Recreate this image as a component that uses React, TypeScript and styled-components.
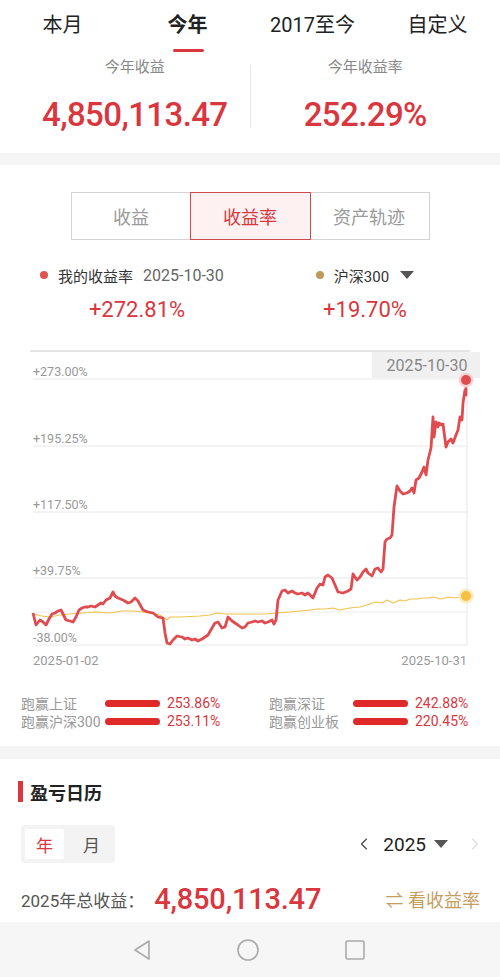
import React from "react";
import styled, { createGlobalStyle } from "styled-components";
import { ChevronLeft, ChevronRight } from "lucide-react";

const GlobalStyle = createGlobalStyle`
  html, body {
    margin: 0;
    padding: 0;
    background: #fff;
  }
  body {
    font-family: Roboto, "Noto Sans CJK SC", sans-serif;
    color: #222;
  }
  * {
    box-sizing: border-box;
  }
`;

const RED = "#d9363e";
const GOLD = "#c59d5f";

const Page = styled.div`
  width: 500px;
  height: 977px;
  overflow: hidden;
  display: flex;
  flex-direction: column;
  background: #fff;
`;

const TopNav = styled.div`
  height: 53px;
  display: grid;
  grid-template-columns: repeat(4, 1fr);
`;

const NavTab = styled.div<{ active?: boolean }>`
  position: relative;
  display: flex;
  justify-content: center;
  padding-top: 11px;
  font-size: 20px;
  line-height: 28px;
  font-weight: ${({ active }) => (active ? 700 : 400)};
  color: #222;

  &::after {
    content: "";
    display: ${({ active }) => (active ? "block" : "none")};
    position: absolute;
    left: 50%;
    bottom: 1px;
    width: 31px;
    height: 3px;
    margin-left: -15px;
    border-radius: 2px;
    background: ${RED};
  }
`;

const Stats = styled.div`
  height: 100px;
  display: grid;
  grid-template-columns: 1fr 1px 1fr;
  align-items: start;
  padding: 0 20px;
`;

const StatCol = styled.div`
  display: flex;
  flex-direction: column;
  align-items: center;
`;

const StatLabel = styled.div`
  margin-top: 4px;
  font-size: 15px;
  line-height: 20px;
  color: #888;
`;

const StatValue = styled.div`
  margin-top: 18px;
  font-size: 33px;
  line-height: 40px;
  letter-spacing: -0.6px;
  font-weight: 500;
  color: ${RED};
`;

const Divider = styled.div`
  margin-top: 12px;
  height: 63px;
  background: #e6e6e6;
`;

const Gap = styled.div<{ h: number }>`
  height: ${({ h }) => h}px;
  background: #f5f5f5;
  flex-shrink: 0;
`;

const ChartCard = styled.div`
  height: 581px;
  display: flex;
  flex-direction: column;
`;

const Segmented = styled.div`
  margin: 27px auto 0;
  width: 359px;
  height: 48px;
  display: grid;
  grid-template-columns: repeat(3, 1fr);
  border: 1px solid #d4d4d4;
`;

const Segment = styled.div<{ active?: boolean }>`
  display: flex;
  align-items: center;
  justify-content: center;
  font-size: 18px;
  color: ${({ active }) => (active ? RED : "#999")};
  background: ${({ active }) => (active ? "#fdf2f1" : "#fff")};
  box-shadow: ${({ active }) => (active ? "0 0 0 1px #cf4a50" : "none")};
  position: relative;
  z-index: ${({ active }) => (active ? 1 : 0)};
`;

const Legend = styled.div`
  margin-top: 23px;
  display: flex;
  padding-left: 40px;
`;

const LegendBlock = styled.div<{ w: number }>`
  width: ${({ w }) => w}px;
  display: flex;
  flex-direction: column;
  align-items: center;
`;

const LegendHead = styled.div<{ start?: boolean }>`
  display: flex;
  align-items: center;
  align-self: ${({ start }) => (start ? "flex-start" : "auto")};
  height: 24px;
  font-size: 15px;
  color: #333;
`;

const Dot = styled.span<{ color: string }>`
  width: 8px;
  height: 8px;
  border-radius: 50%;
  background: ${({ color }) => color};
  margin-right: 10px;
`;

const LegendDate = styled.span`
  margin-left: 10px;
  font-size: 16px;
  color: #666;
`;

const Caret = styled.span<{ gap?: number }>`
  margin-left: ${({ gap }) => gap ?? 11}px;
  width: 0;
  height: 0;
  border-left: 7px solid transparent;
  border-right: 7px solid transparent;
  border-top: 8px solid #555;
`;

const LegendValue = styled.div<{ shift?: number }>`
  margin-top: 8px;
  margin-right: ${({ shift }) => shift || 0}px;
  font-size: 22px;
  line-height: 30px;
  color: ${RED};
`;

const ChartSvg = styled.svg`
  display: block;
  margin-top: 20px;
  width: 500px;
  height: 330px;
`;

const Bench = styled.div`
  margin-top: 19px;
  display: grid;
  grid-template-columns: 248px 1fr;
  padding-left: 21px;
`;

const BenchItem = styled.div`
  display: flex;
  align-items: center;
  height: 18px;
  font-size: 14px;
`;

const BenchLabel = styled.span`
  width: 84px;
  color: #999;
  white-space: nowrap;
`;

const BenchBar = styled.span`
  width: 55px;
  height: 7px;
  border-radius: 4px;
  background: #e02a2a;
  margin-right: 7px;
`;

const BenchValue = styled.span`
  color: ${RED};
`;

const Calendar = styled.div`
  height: 163px;
  display: flex;
  flex-direction: column;
  padding: 0 20px 0 21px;
`;

const SectionTitle = styled.div`
  margin-top: 22px;
  display: flex;
  align-items: center;
  font-size: 18px;
  font-weight: 700;
  color: #222;
  height: 21px;

  &::before {
    content: "";
    width: 5px;
    height: 21px;
    margin: 0 7px 0 -3px;
    background: ${RED};
  }
`;

const CalRow = styled.div`
  margin-top: 23px;
  display: flex;
  align-items: center;
  justify-content: space-between;
`;

const Toggle = styled.div`
  display: flex;
  padding: 4px;
  width: 94px;
  height: 38px;
  border-radius: 4px;
  background: #f3f3f3;
`;

const ToggleItem = styled.div<{ active?: boolean }>`
  width: 39px;
  display: flex;
  align-items: center;
  justify-content: center;
  font-size: 17px;
  border-radius: 2px;
  color: ${({ active }) => (active ? RED : "#555")};
  background: ${({ active }) => (active ? "#fff" : "transparent")};
  & + & {
    margin-left: 8px;
  }
`;

const YearPicker = styled.div`
  display: flex;
  align-items: center;
  font-size: 19px;
  color: #222;
  margin-right: -5px;
`;

const ArrowBox = styled.span<{ muted?: boolean }>`
  display: flex;
  color: ${({ muted }) => (muted ? "#ddd" : "#444")};
  margin: ${({ muted }) => (muted ? "0 0 0 17px" : "0 9px 0 0")};
`;

const TotalRow = styled.div`
  margin-top: 19px;
  display: flex;
  align-items: center;
`;

const TotalLabel = styled.span`
  font-size: 17px;
  color: #555;
`;

const TotalValue = styled.span`
  margin-left: 10px;
  font-size: 29px;
  font-weight: 500;
  letter-spacing: -0.2px;
  color: ${RED};
`;

const SwitchLink = styled.span`
  margin-left: auto;
  font-size: 18px;
  color: ${GOLD};
`;

const SysBar = styled.div`
  margin-top: auto;
  height: 55px;
  background: #f6f6f6;
  display: flex;
  align-items: center;
  justify-content: center;
  gap: 84px;
  padding-right: 2px;
`;

const redPts: [number, number][] = [
  [33, 613], [36, 625], [40, 620], [43, 622], [46, 625], [49, 619], [52, 614],
  [55, 613], [58, 611], [61, 610], [63, 614], [66, 620], [70, 621], [73, 622],
  [76, 617], [79, 610], [82, 608], [85, 607], [88, 607], [91, 606], [95, 607],
  [98, 605], [101, 603], [103, 604], [106, 600], [110, 598], [113, 592],
  [115, 596], [118, 598], [123, 600], [128, 603], [131, 602], [135, 598],
  [138, 601], [143, 610], [148, 612], [153, 613], [158, 617], [163, 618],
  [165, 633], [167, 643], [170, 644], [173, 640], [177, 636], [182, 637],
  [185, 639], [188, 638], [192, 640], [195, 639], [198, 641], [202, 639],
  [205, 637], [208, 635], [212, 628], [215, 623], [218, 622], [222, 628],
  [225, 627], [228, 617], [232, 621], [235, 623], [238, 625], [242, 628],
  [245, 627], [248, 623], [252, 622], [255, 621], [258, 622], [262, 621],
  [265, 623], [268, 622], [272, 620], [274, 624], [276, 620], [278, 600],
  [282, 591], [285, 590], [288, 593], [292, 591], [295, 593], [298, 594],
  [302, 593], [305, 595], [308, 593], [312, 597], [313, 598], [317, 588],
  [320, 584], [323, 585], [325, 577], [328, 575], [332, 578], [335, 585],
  [338, 592], [343, 593], [348, 591], [351, 589], [353, 574], [355, 577],
  [357, 580], [360, 577], [363, 572], [366, 569], [368, 573], [372, 576],
  [375, 569], [378, 568], [381, 572], [383, 569], [385, 542], [387, 539],
  [390, 538], [392, 535], [394, 507], [397, 486], [400, 491], [403, 494],
  [407, 493], [410, 491], [412, 488], [414, 493], [416, 480], [419, 478],
  [422, 472], [424, 467], [426, 475], [428, 460], [431, 448], [433, 417],
  [434, 437], [436, 422], [438, 427], [439, 423], [442, 425], [443, 424],
  [446, 447], [448, 442], [451, 439], [453, 443], [456, 435], [458, 430],
  [460, 417], [462, 420], [463, 403], [465, 390], [466, 395], [466, 380],
];

const yellowPts: [number, number][] = [
  [33, 614], [42, 616], [50, 617], [60, 615], [70, 614], [83, 613], [95, 612],
  [110, 613], [122, 611], [133, 611], [142, 612], [150, 613], [160, 615],
  [164, 618], [167, 620], [170, 617], [180, 617], [200, 616], [210, 615],
  [217, 613], [225, 614], [233, 614], [250, 614], [265, 614], [277, 613],
  [290, 612], [300, 611], [310, 610], [317, 609], [325, 609], [333, 608],
  [340, 610], [350, 608], [360, 607], [367, 605], [372, 603], [377, 602],
  [382, 603], [387, 600], [393, 603], [400, 600], [405, 601], [410, 599],
  [417, 599], [423, 598], [428, 598], [433, 597], [437, 598], [440, 599],
  [445, 598], [450, 597], [455, 598], [460, 597], [466, 596],
];

const toPath = (pts: [number, number][]) =>
  pts.map(([x, y], i) => `${i ? "L" : "M"}${x} ${y}`).join(" ");

const gridLines = [
  { y: 379, label: "+273.00%" },
  { y: 446, label: "+195.25%" },
  { y: 512, label: "+117.50%" },
  { y: 578, label: "+39.75%" },
  { y: 645, label: "-38.00%" },
];

const ReturnChart = () => (
  <ChartSvg viewBox="0 345 500 330">
    <line x1={30} x2={470} y1={351} y2={351} stroke="#dcdcdc" strokeWidth={1.5} />
    {gridLines.map((g) => (
      <g key={g.label}>
        <line x1={33} x2={467} y1={g.y} y2={g.y} stroke="#e8e8e8" strokeWidth={1} />
        <text x={33} y={g.y - 3} fontSize={12.5} fill="#999" fontFamily="Roboto, sans-serif">
          {g.label}
        </text>
      </g>
    ))}
    <line x1={33} x2={467} y1={612} y2={612} stroke="#ececec" strokeWidth={1} />
    <line x1={467} x2={467} y1={379} y2={645} stroke="#e8e8e8" strokeWidth={1} />
    <text x={33} y={665} fontSize={13} fill="#999" fontFamily="Roboto, sans-serif">
      2025-01-02
    </text>
    <text x={467} y={665} fontSize={13} fill="#999" textAnchor="end" fontFamily="Roboto, sans-serif">
      2025-10-31
    </text>
    <path d={toPath(yellowPts)} fill="none" stroke="#f0c24a" strokeWidth={1.1} strokeLinejoin="round" />
    <path d={toPath(redPts)} fill="none" stroke="#e04b50" strokeWidth={2.8} strokeLinejoin="round" />
    <rect x={372} y={352} width={108} height={26} fill="#f0f0f0" />
    <text x={427} y={371} fontSize={16} fill="#888" textAnchor="middle" fontFamily="Roboto, sans-serif">
      2025-10-30
    </text>
    <circle cx={466} cy={380} r={7.5} fill="#f9d3d3" />
    <circle cx={466} cy={380} r={5} fill="#e04b50" />
    <circle cx={466} cy={596} r={7.5} fill="#fcebc0" />
    <circle cx={466} cy={596} r={5} fill="#f5c040" />
  </ChartSvg>
);

const benches = [
  { label: "跑赢上证", value: "253.86%" },
  { label: "跑赢深证", value: "242.88%" },
  { label: "跑赢沪深300", value: "253.11%" },
  { label: "跑赢创业板", value: "220.45%" },
];

const navTabs = ["本月", "今年", "2017至今", "自定义"];

export default function App() {
  return (
    <Page>
      <GlobalStyle />
      <TopNav>
        {navTabs.map((t) => (
          <NavTab key={t} active={t === "今年"}>
            {t}
          </NavTab>
        ))}
      </TopNav>

      <Stats>
        <StatCol>
          <StatLabel>今年收益</StatLabel>
          <StatValue>4,850,113.47</StatValue>
        </StatCol>
        <Divider />
        <StatCol>
          <StatLabel>今年收益率</StatLabel>
          <StatValue>252.29%</StatValue>
        </StatCol>
      </Stats>

      <Gap h={12} />

      <ChartCard>
        <Segmented>
          <Segment>收益</Segment>
          <Segment active>收益率</Segment>
          <Segment>资产轨迹</Segment>
        </Segmented>

        <Legend>
          <LegendBlock w={275}>
            <LegendHead start>
              <Dot color="#e0534f" />
              我的收益率
              <LegendDate>2025-10-30</LegendDate>
            </LegendHead>
            <LegendValue shift={81}>+272.81%</LegendValue>
          </LegendBlock>
          <LegendBlock w={100}>
            <LegendHead>
              <Dot color="#c09a5c" />
              沪深300
              <Caret />
            </LegendHead>
            <LegendValue>+19.70%</LegendValue>
          </LegendBlock>
        </Legend>

        <ReturnChart />

        <Bench>
          {benches.map((b) => (
            <BenchItem key={b.label}>
              <BenchLabel>{b.label}</BenchLabel>
              <BenchBar />
              <BenchValue>{b.value}</BenchValue>
            </BenchItem>
          ))}
        </Bench>
      </ChartCard>

      <Gap h={13} />

      <Calendar>
        <SectionTitle>盈亏日历</SectionTitle>
        <CalRow>
          <Toggle>
            <ToggleItem active>年</ToggleItem>
            <ToggleItem>月</ToggleItem>
          </Toggle>
          <YearPicker>
            <ArrowBox>
              <ChevronLeft size={20} strokeWidth={1.4} />
            </ArrowBox>
            2025
            <Caret gap={8} />
            <ArrowBox muted>
              <ChevronRight size={20} strokeWidth={1.4} />
            </ArrowBox>
          </YearPicker>
        </CalRow>
        <TotalRow>
          <TotalLabel>2025年总收益：</TotalLabel>
          <TotalValue>4,850,113.47</TotalValue>
          <SwitchLink>⇌ 看收益率</SwitchLink>
        </TotalRow>
      </Calendar>

      <SysBar>
        <svg width="20" height="22" viewBox="0 0 20 22">
          <path d="M17 2 L3 11 L17 20 Z" fill="none" stroke="#aaa" strokeWidth="1.6" strokeLinejoin="round" />
        </svg>
        <svg width="24" height="24" viewBox="0 0 24 24">
          <circle cx="12" cy="12" r="10" fill="none" stroke="#aaa" strokeWidth="1.6" />
        </svg>
        <svg width="22" height="22" viewBox="0 0 22 22">
          <rect x="2" y="2" width="18" height="18" rx="1.5" fill="none" stroke="#aaa" strokeWidth="1.6" />
        </svg>
      </SysBar>
    </Page>
  );
}
